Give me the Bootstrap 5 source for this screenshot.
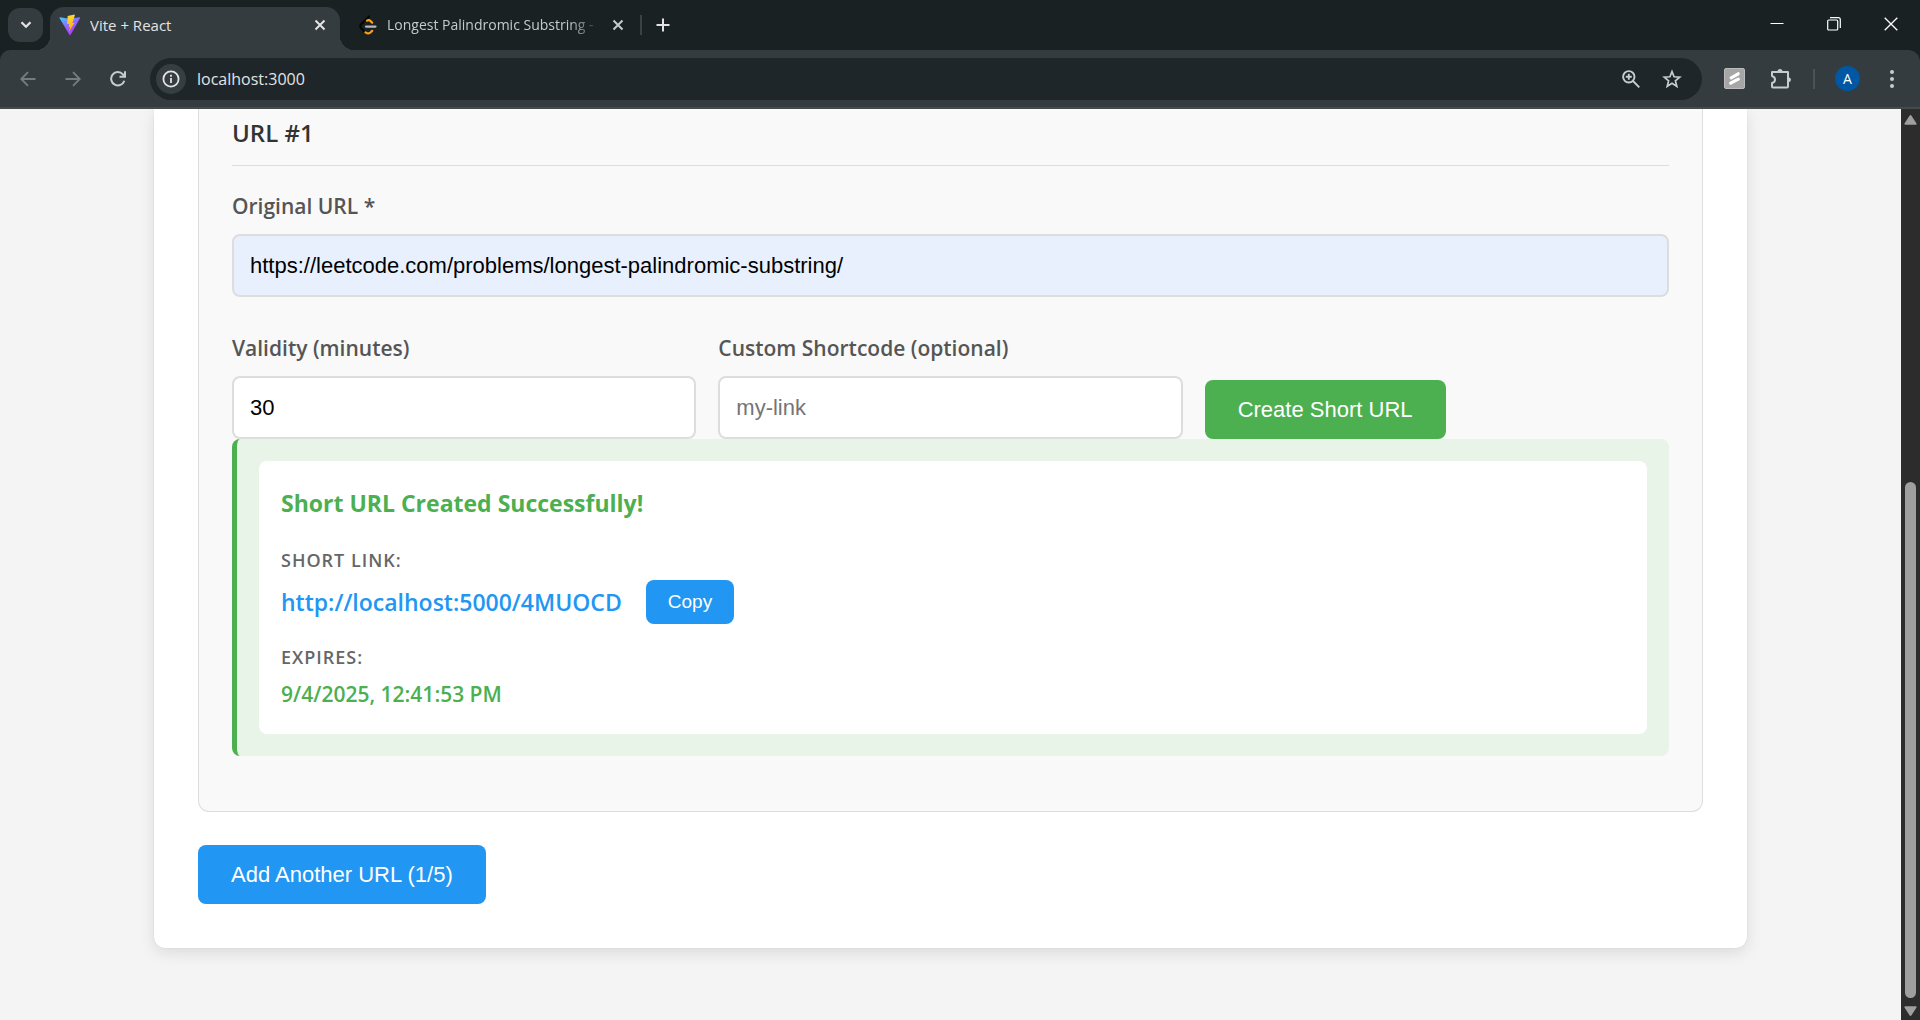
<!DOCTYPE html>
<html lang="en">
<head>
<meta charset="utf-8">
<meta name="viewport" content="width=device-width, initial-scale=1">
<title>Vite + React</title>
<link href="https://cdn.jsdelivr.net/npm/bootstrap@5.3.0/dist/css/bootstrap.min.css" rel="stylesheet">
<style>
  :root { --strip: #1a2123; --bar: #353c3f; --pill: #1f2629; --green: #4caf50; --blue: #2196f3; }
  body { font-family: "Open Sans", "Noto Sans", sans-serif; background: #f4f4f4; overflow: hidden; }
  svg { display: block; flex: none; }

  /* browser frame */
  .tabstrip { background: var(--strip); height: 50px; padding: 0 1px 0 8px; color: #e3e3e3; }
  .ui-btn { border: 0; background: none; padding: 0; color: inherit; display: flex; align-items: center; justify-content: center; flex: none; }
  .tab-search { width: 35px; height: 34px; border-radius: 12px; background: var(--bar); margin: 8px 7px 0 0; }
  .tab-item { height: 43px; margin-top: 7px; font-size: 14px; line-height: 20px; }
  .tab-live { position: relative; width: 290px; padding: 0 12px 8px 9px; background: var(--bar); border-radius: 14px 14px 0 0; }
  .tab-live::before, .tab-live::after { content: ""; position: absolute; bottom: 0; width: 14px; height: 14px; }
  .tab-live::before { left: -14px; background: radial-gradient(circle at 0 0, transparent 14px, var(--bar) 14px); }
  .tab-live::after { right: -14px; background: radial-gradient(circle at 100% 0, transparent 14px, var(--bar) 14px); }
  .tab-rest { width: 294px; padding: 0 8px 8px 18px; color: #c5cbcd; }
  .tab-title { flex: 1 1 0; min-width: 0; overflow: hidden; white-space: nowrap; margin-left: 10px; }
  .tab-live .tab-title { font-size: 15px; margin-left: 9px; }
  .tab-fade { -webkit-mask-image: linear-gradient(90deg, #000 84%, transparent); mask-image: linear-gradient(90deg, #000 84%, transparent); }
  .tab-rule { width: 2px; height: 20px; background: #3a4246; margin: 15px 11px 0 6px; }
  .win-btn { width: 57px; height: 48px; color: #fff; }
  .toolbar-wrap { background: var(--strip); }
  .toolbar { background: var(--bar); height: 59px; border-radius: 10px 12px 0 0; border-bottom: 2px solid #474a4a; padding: 0 20px 0 5px; color: #c7cccf; }
  .nav-btn { width: 45px; height: 42px; }
  .nav-off { color: #757b7e; }
  .address { flex: 1 1 0; height: 42px; border-radius: 21px; background: var(--pill); padding: 0 20px 0 6px; margin-left: 10px; }
  .site-info { width: 30px; height: 30px; border-radius: 50%; background: #373e42; color: #e3e3e3; }
  .address input { flex: 1 1 0; border: 0; outline: 0; background: none; color: #e3e3e3; font-size: 16px; padding: 0 11px; }
  .zoom-btn { margin-right: 22px; }
  .ext-btn { margin-left: 22px; }
  .avatar-btn { width: 25px; height: 25px; border-radius: 50%; background: #0057a3; color: #fff; font-size: 14px; }
  .bar-rule { width: 2px; height: 20px; background: #4a5255; margin: 0 20px; }

  /* page */
  .sheet { max-width: 1593px; background: #fff; border-radius: 0 0 11px 11px; padding: 0 44px 44px; box-shadow: 0 5px 15px rgba(0,0,0,.1), 0 0 1px rgba(0,0,0,.2); }
  .url-item { background: #f9f9f9; border: 1px solid #ddd; border-top: 0; border-radius: 0 0 11px 11px; padding: 0 33px 55px; margin-bottom: 33px; }
  .url-head { font-size: 24px; line-height: 36px; font-weight: 600; color: #333; padding: 6px 0 14px; margin: 0 0 22px; border-bottom: 1px solid #ddd; }
  .field-label { display: block; font-size: 21px; line-height: 36px; font-weight: 600; color: #555; margin-bottom: 10px; }
  .field-box { height: 63px; border: 2px solid #ddd; border-radius: 8px; padding: 0 16px; font: 22px "Liberation Sans", Arial, sans-serif; color: #000; }
  .field-box::placeholder { color: #757575; }
  .field-filled, .field-filled:focus { background: #e8f0fe; }
  .field-row { --bs-gutter-x: 22px; margin-top: 33px; }
  .btn-app { border: 0; border-radius: 8px; color: #fff; height: 59px; padding: 0 33px; font: 22px "Liberation Sans", Arial, sans-serif; }
  .btn-app:hover { color: #fff; }
  .btn-green { background: var(--green); }
  .btn-blue { background: var(--blue); }
  .btn-copy { height: 44px; padding: 0 22px; font-size: 19px; }
  .result { background: #e8f4e8; border-left: 5px solid var(--green); border-radius: 8px; padding: 22px; }
  .result-card { background: #fff; border-radius: 8px; padding: 22px; }
  .result-head { font-size: 23px; line-height: 40px; font-weight: 700; color: var(--green); margin: 0 0 22px; }
  .caption-up { font-size: 18px; line-height: 30px; font-weight: 600; color: #666; margin-bottom: 5px; letter-spacing: 1px; }
  .short-row { gap: 24px; margin-bottom: 18px; }
  .short-url { font-size: 23px; font-weight: 600; color: var(--blue); text-decoration: none; }
  .expiry { font-size: 21px; line-height: 35px; font-weight: 600; color: var(--green); }
  .scroll-col { width: 19px; background: #2c2c2c; padding: 6px 0 4px; }
  .scroll-gap { flex: 353 1 0; }
  .scroll-thumb { flex: 515 1 0; width: 11px; border-radius: 6px; background: #9f9f9f; }
</style>
<script src="https://cdn.jsdelivr.net/npm/bootstrap@5.3.0/dist/js/bootstrap.bundle.min.js"></script>
</head>
<body class="d-flex flex-column vh-100">

<header class="flex-shrink-0">
  <div class="tabstrip d-flex">
    <button class="ui-btn tab-search" type="button" aria-label="Search tabs">
      <svg width="12" height="8" viewBox="0 0 12 8" fill="none" stroke="currentColor" stroke-width="2.3"><path d="M1.5 1.2 6 5.7l4.500-4.500"/></svg>
    </button>
    <div class="tab-item tab-live d-flex align-items-center">
      <svg width="22" height="22" viewBox="0 0 22 22">
        <defs>
          <linearGradient id="vg" x1="0" y1="0" x2=".6" y2="1"><stop offset="0" stop-color="#41d1ff"/><stop offset=".5" stop-color="#8b6cff"/><stop offset="1" stop-color="#bd34fe"/></linearGradient>
          <linearGradient id="vy" x1=".4" y1="0" x2=".5" y2="1"><stop offset="0" stop-color="#ffdd35"/><stop offset="1" stop-color="#ffa800"/></linearGradient>
        </defs>
        <path d="M1 3.200 10.200 4.800 20.400 3.200Q21.500 3.200 21 4.200L11.600 20.800Q11 21.500 10.400 20.800L.6 4.200Q.2 3.200 1 3.200Z" fill="url(#vg)"/>
        <path d="m15.500.6-6.800 1.300-.6 8.300 2.200-.5-.7 3.600 1.500-.5-.9 4.700 5.300-8.800-2.200.4 1.200-3.300 1.300-4.300z" fill="url(#vy)"/>
      </svg>
      <span class="tab-title">Vite + React</span>
      <button class="ui-btn" type="button" aria-label="Close tab"><svg width="16" height="16" viewBox="0 0 16 16" stroke="currentColor" stroke-width="2"><path d="m3.500 3.500 9 9m0-9-9 9"/></svg></button>
    </div>
    <div class="tab-item tab-rest d-flex align-items-center">
      <svg width="19" height="20" viewBox="0 0 19 20" fill="none" stroke-width="2.200" stroke-linecap="round">
        <path d="M11 1.500 3.200 9.300q-1.800 1.900 0 4l3 3.300" stroke="#050606"/>
        <path d="M9 5.700q1.800-1.300 3.500.3l1.600 1.600M7.500 17.300q3 2 5 .2l1.700-1.700" stroke="#ffa116"/>
        <path d="M8 11.600h9.500" stroke="#b9b9b9"/>
      </svg>
      <span class="tab-title tab-fade me-2">Longest Palindromic Substring -</span>
      <button class="ui-btn" type="button" aria-label="Close tab"><svg width="16" height="16" viewBox="0 0 16 16" stroke="currentColor" stroke-width="2"><path d="m3.500 3.500 9 9m0-9-9 9"/></svg></button>
    </div>
    <span class="tab-rule"></span>
    <button class="ui-btn" type="button" aria-label="New tab"><svg width="20" height="20" viewBox="0 0 20 20" stroke="#e3e3e3" stroke-width="2"><path d="M10 3.500v13M3.500 10h13"/></svg></button>
    <div class="d-flex ms-auto">
      <button class="ui-btn win-btn" type="button" aria-label="Minimize"><svg width="14" height="14" viewBox="0 0 14 14" stroke="currentColor"><path d="M.5 6.500h13"/></svg></button>
      <button class="ui-btn win-btn" type="button" aria-label="Restore"><svg width="14" height="14" viewBox="0 0 14 14" fill="none" stroke="currentColor" stroke-width="1.200"><rect x=".7" y="3" width="10" height="10" rx="1"/><path d="M3 .7h8.300q2 0 2 2V11"/></svg></button>
      <button class="ui-btn win-btn" type="button" aria-label="Close"><svg width="14" height="14" viewBox="0 0 14 14" stroke="currentColor" stroke-width="1.300"><path d="m.7.7 12.600 12.600m0-12.600L.7 13.300"/></svg></button>
    </div>
  </div>

  <div class="toolbar-wrap">
    <nav class="toolbar d-flex align-items-center" aria-label="Browser toolbar">
      <button class="ui-btn nav-btn nav-off" type="button" aria-label="Back"><svg width="16" height="16" viewBox="0 0 16 16" fill="none" stroke="currentColor" stroke-width="1.900"><path d="M15.500 8H1.600M8 1.200 1.300 8 8 14.800"/></svg></button>
      <button class="ui-btn nav-btn nav-off" type="button" aria-label="Forward"><svg width="16" height="16" viewBox="0 0 16 16" fill="none" stroke="currentColor" stroke-width="1.900"><path d="M.5 8h13.900M8 1.200 14.700 8 8 14.800"/></svg></button>
      <button class="ui-btn nav-btn" type="button" aria-label="Reload"><svg width="16" height="16" viewBox="0 0 16 16" fill="none" stroke="currentColor" stroke-width="2"><path d="M14.300 9.700A6.700 6.700 0 1 1 12.900 3.300l1.600 1.900M15 .3v5.500H9.500"/></svg></button>
      <div class="address d-flex align-items-center">
        <button class="ui-btn site-info" type="button" aria-label="Site information"><svg width="18" height="18" viewBox="0 0 18 18" fill="none" stroke="currentColor" stroke-width="1.800"><circle cx="9" cy="9" r="7.600"/><path d="M9 8v5M9 4.800v1.900"/></svg></button>
        <input type="text" value="localhost:3000" aria-label="Address">
        <button class="ui-btn zoom-btn" type="button" aria-label="Zoom"><svg width="18" height="18" viewBox="0 0 18 18" fill="none" stroke="currentColor" stroke-width="1.900"><circle cx="6.800" cy="6.800" r="5.700"/><path d="m11 11 6.300 6.300M6.800 3.800v6M3.800 6.800h6"/></svg></button>
        <button class="ui-btn" type="button" aria-label="Bookmark"><svg width="20" height="20" viewBox="0 0 20 20" fill="none" stroke="currentColor" stroke-width="1.700"><path d="m10 2.600 2.100 5.200 5.600.4-4.300 3.600 1.400 5.500-4.800-3-4.800 3 1.400-5.500-4.300-3.600 5.600-.4z"/></svg></button>
      </div>
      <button class="ui-btn ext-btn" type="button" aria-label="Extension"><svg width="21" height="21" viewBox="0 0 21 21"><rect x=".5" y=".5" width="20" height="20" rx="1.500" fill="#a6a6a6" stroke="#bcbcbc"/><path d="m7.200 9.800 7-4M6.700 15.200l7.600-4" stroke="#fff" stroke-width="3.200" stroke-linecap="round"/></svg></button>
      <button class="ui-btn ms-4" type="button" aria-label="Extensions"><svg width="24" height="22" viewBox="0 0 24 22" fill="none" stroke="currentColor" stroke-width="2" stroke-linejoin="round"><path d="M3 4h16v14.500q0 1-1 1H4q-1 0-1-1V15q3-.6 3-3.300T3 8z"/><path d="M8.500 3.500a2.500 2.500 0 0 1 5 0zM19.500 9.200a2.500 2.500 0 0 1 0 5z" fill="currentColor" stroke="none"/></svg></button>
      <span class="bar-rule"></span>
      <button class="ui-btn avatar-btn" type="button">A</button>
      <button class="ui-btn ms-4" type="button" aria-label="Menu"><svg width="16" height="20" viewBox="0 0 16 20" fill="currentColor"><circle cx="8" cy="3" r="2"/><circle cx="8" cy="10" r="2"/><circle cx="8" cy="17" r="2"/></svg></button>
    </nav>
  </div>
</header>

<div class="d-flex flex-grow-1 overflow-hidden">
  <main class="flex-grow-1">
    <div class="sheet mx-auto">
      <section class="url-item">
        <h3 class="url-head">URL #1</h3>
        <form>
          <label class="field-label" for="original">Original URL *</label>
          <input class="form-control field-box field-filled" id="original" type="url" value="https://leetcode.com/problems/longest-palindromic-substring/">
          <div class="row field-row align-items-end">
            <div class="col-4">
              <label class="field-label" for="validity">Validity (minutes)</label>
              <input class="form-control field-box" id="validity" type="text" inputmode="numeric" value="30">
            </div>
            <div class="col-4">
              <label class="field-label" for="shortcode">Custom Shortcode (optional)</label>
              <input class="form-control field-box" id="shortcode" type="text" placeholder="my-link">
            </div>
            <div class="col-4">
              <button class="btn btn-app btn-green" type="button">Create Short URL</button>
            </div>
          </div>
        </form>
        <div class="result">
          <div class="result-card">
            <h4 class="result-head">Short URL Created Successfully!</h4>
            <div class="caption-up">SHORT LINK:</div>
            <div class="short-row d-flex align-items-center">
              <a class="short-url" href="#">http://localhost:5000/4MUOCD</a>
              <button class="btn btn-app btn-blue btn-copy" type="button">Copy</button>
            </div>
            <div class="caption-up">EXPIRES:</div>
            <div class="expiry">9/4/2025, 12:41:53 PM</div>
          </div>
        </div>
      </section>
      <button class="btn btn-app btn-blue" type="button">Add Another URL (1/5)</button>
    </div>
  </main>
  <div class="scroll-col d-flex flex-column align-items-center flex-shrink-0" aria-hidden="true">
    <svg class="mb-1" width="13" height="10" viewBox="0 0 13 10" fill="#9f9f9f"><path d="M5.500.7q1-1.200 2 0l5 7.800q.5 1.300-1 1.300h-10q-1.500 0-1-1.300z"/></svg>
    <div class="scroll-gap"></div>
    <div class="scroll-thumb"></div>
    <svg class="mt-2" width="13" height="10" viewBox="0 0 13 10" fill="#9f9f9f"><path d="M5.500 9.300q1 1.200 2 0l5-7.800Q13 .2 11.500.2h-10Q0 .2.500 1.500z"/></svg>
  </div>
</div>
</body>
</html>
